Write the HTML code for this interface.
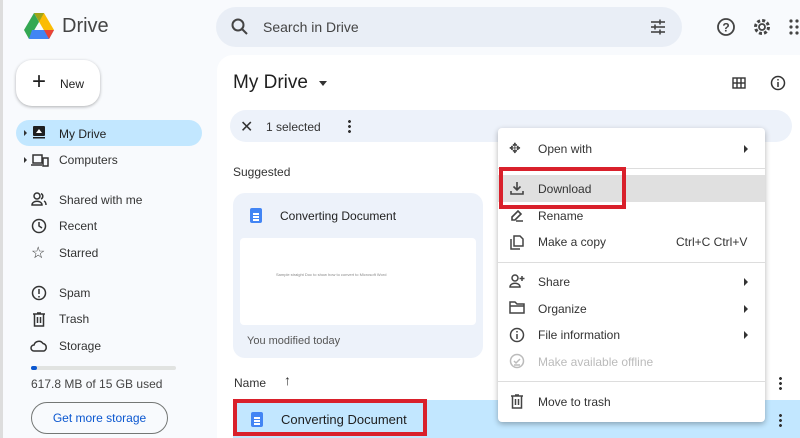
<!DOCTYPE html>
<html><head><style>
*{margin:0;padding:0;box-sizing:border-box}
body{width:800px;height:438px;overflow:hidden;background:#f8fafd;font-family:"Liberation Sans",sans-serif;color:#1f1f1f;position:relative}
.a{position:absolute}
.t{font-size:12px;color:#1f1f1f;white-space:nowrap}
svg{display:block}
</style></head><body>
<div class="a" style="left:0;top:0;width:3px;height:438px;background:#ddd"></div>
<!-- logo -->
<svg class="a" style="left:24px;top:13px" width="30" height="27" viewBox="0 0 30 27">
<polygon points="10,0 20,0 30,17 25,26" fill="#fbbc04"/>
<polygon points="10,0 0,17 5,26 15,9" fill="#34a853"/>
<polygon points="5,26 25,26 30,17 8,17" fill="#4285f4"/>
<polygon points="10,0 20,0 15,9" fill="#188038" opacity=".4"/>
<polygon points="25,26 30,17 20,17" fill="#ea4335"/>
</svg>
<div class="a" style="left:62px;top:15px;font-size:20px;color:#444">Drive</div>
<!-- search -->
<div class="a" style="left:216px;top:7px;width:466px;height:40px;border-radius:20px;background:#e9eef6"></div>
<svg class="a" style="left:231px;top:18px" width="18" height="18" viewBox="0 0 18 18"><circle cx="7" cy="7" r="5.5" stroke="#444" stroke-width="2" fill="none"/><line x1="11" y1="11" x2="16" y2="16" stroke="#444" stroke-width="2"/></svg>
<div class="a" style="left:263px;top:19px;font-size:14px;color:#444">Search in Drive</div>
<svg class="a" style="left:649px;top:18px" width="18" height="18" viewBox="0 0 18 18" stroke="#444" stroke-width="1.6"><line x1="2" y1="4" x2="16" y2="4"/><line x1="2" y1="9" x2="16" y2="9"/><line x1="2" y1="14" x2="16" y2="14"/><line x1="11" y1="1.5" x2="11" y2="6.5"/><line x1="6" y1="6.5" x2="6" y2="11.5"/><line x1="11" y1="11.5" x2="11" y2="16.5"/></svg>
<svg class="a" style="left:716px;top:17px" width="20" height="20" viewBox="0 0 20 20"><circle cx="10" cy="10" r="8" stroke="#444" stroke-width="1.8" fill="none"/><text x="10" y="14.5" font-size="12" font-weight="bold" text-anchor="middle" fill="#444" font-family="Liberation Sans">?</text></svg>
<svg class="a" style="left:752px;top:17px" width="20" height="20" viewBox="0 0 20 20"><circle cx="10" cy="10" r="6.5" stroke="#444" stroke-width="3" fill="none" stroke-dasharray="3 2.1"/><circle cx="10" cy="10" r="3" stroke="#444" stroke-width="1.8" fill="none"/></svg>
<svg class="a" style="left:789px;top:19px" width="11" height="16" viewBox="0 0 11 16" fill="#444"><circle cx="2" cy="2" r="1.6"/><circle cx="8" cy="2" r="1.6"/><circle cx="2" cy="8" r="1.6"/><circle cx="8" cy="8" r="1.6"/><circle cx="2" cy="14" r="1.6"/><circle cx="8" cy="14" r="1.6"/></svg>
<!-- New -->
<div class="a" style="left:16px;top:60px;width:84px;height:46px;border-radius:16px;background:#fff;box-shadow:0 1px 3px rgba(0,0,0,.3)"></div>
<div class="a" style="left:32px;top:70px;font-size:24px;font-weight:300;line-height:24px">+</div>
<div class="a t" style="left:60px;top:77px;font-size:12px">New</div>
<!-- nav -->
<div class="a" style="left:16px;top:120px;width:186px;height:26px;border-radius:13px;background:#c2e7ff"></div>
<div class="a" style="left:24px;top:130px;border-left:3px solid #333;border-top:3px solid transparent;border-bottom:3px solid transparent"></div>
<div class="a" style="left:24px;top:157px;border-left:3px solid #333;border-top:3px solid transparent;border-bottom:3px solid transparent"></div>
<svg class="a" style="left:32px;top:125px" width="14" height="14"><rect x="1" y="1" width="12" height="10" rx="1" fill="#1f1f1f"/><rect x="1" y="12" width="12" height="1.5" fill="#1f1f1f"/><path d="M4 8 L7 4 L10 8Z" fill="#fff"/></svg>
<svg class="a" style="left:31px;top:153px" width="18" height="14" stroke="#333" stroke-width="1.5" fill="none"><rect x="2" y="2" width="9" height="8"/><line x1="0" y1="12" x2="11" y2="12"/><rect x="12" y="5" width="5" height="8"/></svg>
<div class="a t" style="left:59px;top:127px">My Drive</div>
<div class="a t" style="left:59px;top:153px;color:#333">Computers</div>
<svg class="a" style="left:31px;top:192px" width="16" height="14" stroke="#333" stroke-width="1.5" fill="none"><circle cx="6" cy="4" r="3"/><path d="M1 13 C1 8 11 8 11 13Z"/><path d="M10 1.5 A3 3 0 0 1 10 7 M13 9 C15 10 15 12 15 13"/></svg>
<div class="a t" style="left:59px;top:193px;color:#333">Shared with me</div>
<svg class="a" style="left:31px;top:218px" width="16" height="16" stroke="#333" stroke-width="1.5" fill="none"><circle cx="8" cy="8" r="6.5"/><path d="M8 4 V8 L11 10"/></svg>
<div class="a t" style="left:59px;top:219px;color:#333">Recent</div>
<div class="a" style="left:31px;top:243px;font-size:16px;color:#333">☆</div>
<div class="a t" style="left:59px;top:246px;color:#333">Starred</div>
<svg class="a" style="left:31px;top:285px" width="16" height="16" stroke="#333" stroke-width="1.5" fill="none"><circle cx="8" cy="8" r="6.5"/><path d="M8 4 V9 M8 11 V12.5"/></svg>
<div class="a t" style="left:59px;top:286px;color:#333">Spam</div>
<svg class="a" style="left:32px;top:312px" width="14" height="15" stroke="#333" stroke-width="1.5" fill="none"><path d="M1 2 H13 M5 1 H9 M2.5 2 V14 H11.5 V2 M5.5 5 V11 M8.5 5 V11"/></svg>
<div class="a t" style="left:59px;top:312px;color:#333">Trash</div>
<svg class="a" style="left:30px;top:339px" width="18" height="13" stroke="#333" stroke-width="1.5" fill="none"><path d="M4 12 A3 3 0 0 1 4 6 A5 5 0 0 1 13 4.5 A4 4 0 0 1 14 12Z"/></svg>
<div class="a t" style="left:59px;top:339px;color:#333">Storage</div>
<div class="a" style="left:31px;top:366px;width:145px;height:4px;border-radius:2px;background:#e1e3e1"></div>
<div class="a" style="left:31px;top:366px;width:6px;height:4px;border-radius:2px;background:#0b57d0"></div>
<div class="a t" style="left:31px;top:377px;color:#444">617.8 MB of 15 GB used</div>
<div class="a" style="left:31px;top:402px;width:137px;height:32px;border:1px solid #747775;border-radius:16px;color:#0b57d0;font-size:12px;text-align:center;line-height:30px">Get more storage</div>
<!-- main panel -->
<div class="a" style="left:217px;top:55px;width:583px;height:383px;background:#fff;border-radius:16px 0 0 0"></div>
<div class="a" style="left:233px;top:72px;font-size:19px;color:#1f1f1f">My Drive</div>
<div class="a" style="left:319px;top:81px;border-top:5px solid #333;border-left:4px solid transparent;border-right:4px solid transparent"></div>
<svg class="a" style="left:732px;top:77px" width="14" height="12" stroke="#333" stroke-width="1.4" fill="none"><rect x="1" y="1" width="12" height="10"/><line x1="1" y1="6" x2="13" y2="6"/><line x1="5" y1="1" x2="5" y2="11"/><line x1="9" y1="1" x2="9" y2="11"/></svg>
<svg class="a" style="left:770px;top:75px" width="16" height="16" stroke="#333" stroke-width="1.5" fill="none"><circle cx="8" cy="8" r="6.5"/><path d="M8 7 V12 M8 4 V5.5"/></svg>
<div class="a" style="left:230px;top:110px;width:562px;height:32px;border-radius:16px;background:#edf2fa"></div>
<div class="a" style="left:240px;top:117px;font-size:16px;color:#333">✕</div>
<div class="a t" style="left:266px;top:120px;color:#333">1 selected</div>
<div class="a" style="left:348px;top:119px;width:3px;height:14px;background:radial-gradient(circle,#333 1.3px,transparent 1.6px) 0 0/3px 5px"></div>
<div class="a t" style="left:233px;top:165px;color:#333">Suggested</div>
<!-- card -->
<div class="a" style="left:233px;top:193px;width:250px;height:165px;border-radius:12px;background:#edf2fa"></div>
<div class="a" style="left:250px;top:208px;width:12px;height:15px;border-radius:2px;background:#4285f4"></div>
<div class="a" style="left:253px;top:213px;width:6px;height:1.5px;background:#fff;box-shadow:0 3px 0 #fff,0 6px 0 #fff"></div>
<div class="a t" style="left:280px;top:209px">Converting Document</div>
<div class="a" style="left:240px;top:238px;width:236px;height:87px;background:#fff;border-radius:4px"></div>
<div class="a" style="left:276px;top:272px;font-size:4px;color:#888">Sample straight Doc to show how to convert to Microsoft Word</div>
<div class="a t" style="left:247px;top:335px;font-size:11px;color:#555">You modified today</div>
<div class="a t" style="left:234px;top:376px;color:#333">Name</div>
<div class="a" style="left:284px;top:372px;font-size:14px;color:#333">↑</div>
<div class="a" style="left:779px;top:376px;width:3px;height:14px;background:radial-gradient(circle,#333 1.3px,transparent 1.6px) 0 0/3px 5px"></div>
<!-- selected row -->
<div class="a" style="left:233px;top:400px;width:567px;height:38px;background:#c2e7ff"></div>
<div class="a" style="left:233px;top:399px;width:194px;height:37px;border:4px solid #d9202b"></div>
<div class="a" style="left:251px;top:412px;width:12px;height:15px;border-radius:2px;background:#4285f4"></div>
<div class="a" style="left:254px;top:417px;width:6px;height:1.5px;background:#fff;box-shadow:0 3px 0 #fff,0 6px 0 #fff"></div>
<div class="a t" style="left:281px;top:412px;font-size:13px">Converting Document</div>
<div class="a" style="left:779px;top:413px;width:3px;height:14px;background:radial-gradient(circle,#333 1.3px,transparent 1.6px) 0 0/3px 5px"></div>
<!-- menu -->
<div class="a" style="left:498px;top:128px;width:267px;height:294px;background:#fff;border-radius:4px;box-shadow:0 2px 6px rgba(0,0,0,.3)"></div>
<div class="a" style="left:498px;top:168px;width:267px;height:1px;background:#ddd"></div>
<div class="a" style="left:498px;top:262px;width:267px;height:1px;background:#ddd"></div>
<div class="a" style="left:498px;top:381px;width:267px;height:1px;background:#ddd"></div>
<div class="a" style="left:498px;top:175px;width:267px;height:27px;background:#e0e0e0"></div>
<div class="a" style="left:499px;top:167px;width:127px;height:42px;border:4px solid #d9202b"></div>
<div class="a" style="left:509px;top:140px;font-size:14px;color:#444">✥</div>
<svg class="a" style="left:510px;top:181px" width="14" height="14" stroke="#444" stroke-width="1.6" fill="none"><path d="M7 1 V9 M3.5 5.5 L7 9 L10.5 5.5 M1 10 V13 H13 V10"/></svg>
<svg class="a" style="left:510px;top:208px" width="14" height="14" stroke="#444" stroke-width="1.6" fill="none"><path d="M2 12 L2 9 L8 3 L11 6 L5 12Z M6 13 H13"/></svg>
<svg class="a" style="left:510px;top:234px" width="14" height="16" stroke="#444" stroke-width="1.5" fill="none"><path d="M4 2 H10 L13 5 V12 H4Z M1 5 V15 H10"/></svg>
<svg class="a" style="left:509px;top:274px" width="16" height="14" stroke="#444" stroke-width="1.5" fill="none"><circle cx="6" cy="4" r="3"/><path d="M1 13 C1 8 11 8 11 13Z M13 2 V7 M10.5 4.5 H15.5"/></svg>
<svg class="a" style="left:509px;top:301px" width="16" height="13" stroke="#444" stroke-width="1.5" fill="none"><path d="M1 1 H6 L8 3 H15 V12 H1Z M1 5 H15"/></svg>
<svg class="a" style="left:509px;top:327px" width="16" height="16" stroke="#444" stroke-width="1.5" fill="none"><circle cx="8" cy="8" r="6.5"/><path d="M8 7 V12 M8 4 V5.5"/></svg>
<svg class="a" style="left:509px;top:353px" width="16" height="16" stroke="#bbb" stroke-width="1.5" fill="none"><circle cx="8" cy="8" r="6.5"/><path d="M5 8 L7 10 L11 6 M5 12 H11"/></svg>
<svg class="a" style="left:510px;top:394px" width="14" height="15" stroke="#444" stroke-width="1.5" fill="none"><path d="M1 2 H13 M5 1 H9 M2.5 2 V14 H11.5 V2 M5.5 5 V11 M8.5 5 V11"/></svg>
<div class="a t" style="left:538px;top:142px;color:#333">Open with</div>
<div class="a t" style="left:538px;top:182px;color:#333">Download</div>
<div class="a t" style="left:538px;top:209px;color:#333">Rename</div>
<div class="a t" style="left:538px;top:235px;color:#333">Make a copy</div>
<div class="a t" style="left:676px;top:235px;color:#333">Ctrl+C Ctrl+V</div>
<div class="a t" style="left:538px;top:275px;color:#333">Share</div>
<div class="a t" style="left:538px;top:302px;color:#333">Organize</div>
<div class="a t" style="left:538px;top:328px;color:#333">File information</div>
<div class="a t" style="left:538px;top:355px;color:#bbb">Make available offline</div>
<div class="a t" style="left:538px;top:395px;color:#333">Move to trash</div>
<div class="a" style="left:744px;top:145px;border-left:4px solid #333;border-top:4px solid transparent;border-bottom:4px solid transparent"></div>
<div class="a" style="left:744px;top:278px;border-left:4px solid #333;border-top:4px solid transparent;border-bottom:4px solid transparent"></div>
<div class="a" style="left:744px;top:305px;border-left:4px solid #333;border-top:4px solid transparent;border-bottom:4px solid transparent"></div>
<div class="a" style="left:744px;top:331px;border-left:4px solid #333;border-top:4px solid transparent;border-bottom:4px solid transparent"></div>
</body></html>
